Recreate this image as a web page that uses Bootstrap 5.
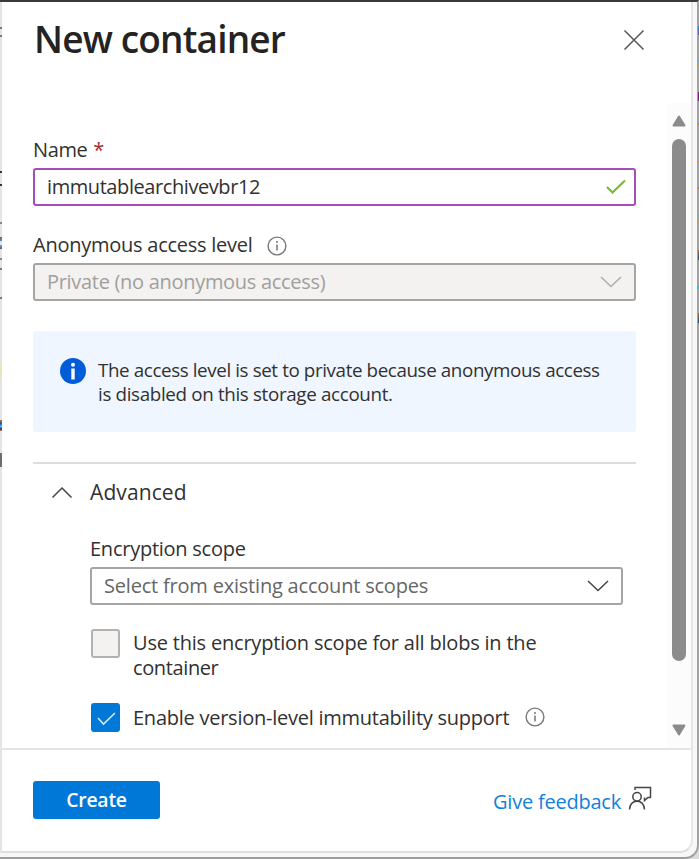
<!DOCTYPE html>
<html lang="en">
<head>
<meta charset="utf-8">
<meta name="viewport" content="width=device-width, initial-scale=1">
<title>New container</title>
<link href="https://cdn.jsdelivr.net/npm/bootstrap@5.3.0/dist/css/bootstrap.min.css" rel="stylesheet">
<style>
body{font-family:"Open Sans","Noto Sans",sans-serif;font-size:20px;line-height:24px;letter-spacing:-.25px;color:#323130;background:#dcdcdc;height:859px;overflow:hidden}
.win{height:859px;border-top:2px solid #3b393b;border-right:2px solid #a2a2a2;border-bottom:2px solid #9c9c9c;border-bottom-right-radius:14px;background:#f7f7f7;padding:0 4px 4px 0}
.pane{border-left:2px solid #e4e4e4;border-right:2px solid #e6e6e6;border-bottom:2px solid #dedede;border-bottom-right-radius:13px;background:#fff}
.head{height:101px;padding:17px 46px 0 32px}
.ttl{font-size:37px;font-weight:600;line-height:40px;letter-spacing:-.83px;color:#242322}
.t{white-space:nowrap}
.body-area{height:647px}
.form-area{padding:35px 31px 0 31px}
.box{height:38px;border:2px solid #a6a5a3;border-radius:3px;padding:1px 8px 0 12px}
.box.ok{border-color:#a64dbb;margin-top:6px}
.box.ok .t{letter-spacing:-.42px}
.box.off{background:#f3f2f1;color:#a19f9d;margin-top:6px;letter-spacing:-.3px}
.box.pick{color:#666;margin-top:6px;letter-spacing:-.2px}
.level{margin-top:27px}
.note{height:101px;margin-top:30px;background:#eff6ff;border-radius:3px;padding:27px 20px 0 27px;font-size:18.8px;letter-spacing:-.39px}
.note-text{margin-left:12px}
.note-text .t{letter-spacing:-.34px}
.rule{border-top:2px solid #dddddc;margin-top:30px}
.fold{margin-top:16px;padding-left:18px}
.fold .t{font-size:21px;letter-spacing:.1px;margin-left:17px}
.adv{padding-left:57px;padding-right:13px}
.scope{margin-top:33px}
.opt{margin:24px 0 0 1px}
.opt-text{margin-left:13px;line-height:25px}
.opt + .opt{margin-top:23px}
.opt-text.two{padding-top:1px;letter-spacing:-.2px}
.cb{width:29px;height:29px;border:2px solid #b3b2b0;border-radius:3px;background:#f3f2f1}
.cb.on{background:#0078d7;border-color:#0078d7}
.rail{width:24px;background:#fcfcfc;padding-top:12px}
.thumb{width:14px;height:522px;border-radius:7px;background:#8b8b8b;margin-top:12px;margin-bottom:63px}
.foot{height:103px;border-top:2px solid #e4e4e4;padding:31px 39px 0 31px}
.make,.make:hover{width:127px;height:38px;background:#0078d7;color:#fff;border-radius:3px;font-weight:600;font-size:19.4px;line-height:36px;padding:0;border:0;letter-spacing:-.2px}
.fb{color:#1181db;padding-top:9px;letter-spacing:-.22px}
.fb svg{margin:-4px 0 0 7px}
.req{color:#a4262c;margin-left:1px}
.tight{letter-spacing:-.38px}
svg{display:block;fill:none;flex:none}
.edge{position:absolute;top:0;width:2px;height:859px;background-repeat:no-repeat}
.edge-l{left:0;background-image:linear-gradient(#777,#777),linear-gradient(#777,#777),linear-gradient(#333,#333),linear-gradient(#333,#333),linear-gradient(#888,#888),linear-gradient(#8a5f60,#3e8fe0),linear-gradient(#55aef5,#725545),linear-gradient(#888,#888),linear-gradient(#777,#777),linear-gradient(#777,#777),linear-gradient(#e9e6bd,#e9e6bd),linear-gradient(#c97a2c,#0b59bd 30%,#5db4ff 60%,#123a8c 80%,#c97a2c),linear-gradient(#6d6d6d,#6d6d6d);background-size:2px 2px,2px 2px,2px 2px,2px 2px,2px 2px,2px 4px,2px 4px,2px 2px,2px 2px,2px 2px,2px 14px,2px 11px,2px 14px;background-position:0 27px,0 35px,0 171px,0 184px,0 222px,0 237px,0 245px,0 258px,0 268px,0 297px,0 363px,0 420px,0 453px}
.edge-r{right:0;width:1px;background-image:linear-gradient(#258fd0,#7b4fb0),linear-gradient(#58acd4,#d49a3c),linear-gradient(#7c1a7d,#7c1a7d),linear-gradient(#b58239,#b58239),linear-gradient(#c19548,#c19548),linear-gradient(#a9793a,#a9793a),linear-gradient(#68a8c8,#d09a47),linear-gradient(#a86634,#244a83),linear-gradient(#3cb0c4,#3cb0c4),linear-gradient(#a86634,#244a83);background-size:1px 9px,1px 7px,1px 9px,1px 2px,1px 2px,1px 2px,1px 9px,1px 10px,1px 3px,1px 10px;background-position:0 26px,0 60px,0 92px,0 123px,0 161px,0 187px,0 214px,0 250px,0 286px,0 313px}
</style>
<script src="https://cdn.jsdelivr.net/npm/bootstrap@5.3.0/dist/js/bootstrap.bundle.min.js"></script>
</head>
<body>
<div class="win d-flex">
<div class="pane flex-grow-1 d-flex flex-column">
  <header class="head d-flex justify-content-between">
    <h1 class="ttl m-0">New container</h1>
    <svg width="22" height="24" class="mt-2" viewBox="0 0 22 24" stroke="#555" stroke-width="1.500"><path d="M1.500 3.500l19 19M20.500 3.500l-19 19"/></svg>
  </header>
  <div class="body-area d-flex">
    <main class="form-area flex-grow-1">
      <div class="tight"><span>Name</span> <span class="req">*</span></div>
      <div class="box ok d-flex align-items-center justify-content-between"><span class="t">immutablearchivevbr12</span>
        <svg width="20" height="16" viewBox="0 0 20 16" stroke="#76b82e" stroke-width="2"><path d="M1 8l5.500 5.500L19 1.500"/></svg></div>
      <div class="level d-flex align-items-center"><span class="t">Anonymous access level</span>
        <svg class="ms-3 me-auto" width="20" height="20" viewBox="0 0 20 20" stroke="#797775" stroke-width="1.400" transform="translate(-2 1)"><circle cx="10" cy="10" r="8.900"/><path d="M10 8.500v6M10 5v2" stroke="#8f8d8b" stroke-width="1.800"/></svg></div>
      <div class="box off d-flex align-items-center justify-content-between"><span class="t">Private (no anonymous access)</span>
        <svg width="29" height="14" viewBox="0 0 29 14" stroke="#b0aeac" stroke-width="1.600"><path d="M4 2l10 9.500L24 2"/></svg></div>
      <div class="note d-flex">
        <svg width="26" height="26" viewBox="0 0 26 26"><circle cx="13" cy="13" r="13" fill="#015cda"/><circle cx="13" cy="6.800" r="2" fill="#fff"/><path d="M11.300 10.500h3.400v11h-3.400z" fill="#fff"/></svg>
        <div class="note-text text-nowrap">The access level is set to private because anonymous access<br><span class="t">is disabled on this storage account.</span></div>
      </div>
      <div class="rule"></div>
      <div class="fold d-flex align-items-center"><svg width="22" height="14" viewBox="0 0 22 14" stroke="#484644" stroke-width="1.500"><path d="M1.500 12.500L11 3 20.500 12.500"/></svg><span class="t">Advanced</span></div>
      <div class="adv">
        <div class="scope t">Encryption scope</div>
        <div class="box pick d-flex align-items-center justify-content-between"><span class="t">Select from existing account scopes</span>
          <svg width="29" height="14" viewBox="0 0 29 14" stroke="#484644" stroke-width="1.500"><path d="M4 2l10 9.500L24 2"/></svg></div>
        <div class="opt d-flex"><div class="cb"></div><div class="opt-text two text-nowrap">Use this encryption scope for all blobs in the<br><span class="tight">container</span></div></div>
        <div class="opt d-flex align-items-center"><div class="cb on"><svg width="25" height="25" viewBox="0 0 25 25" stroke="#d6e9f9" stroke-width="1.600"><path d="M5 13l5.500 6L22 8"/></svg></div><span class="opt-text t">Enable version-level immutability support</span>
          <svg class="ms-3" width="20" height="20" viewBox="0 0 20 20" stroke="#797775" stroke-width="1.400"><circle cx="10" cy="10" r="8.900"/><path d="M10 8.500v6M10 5v2" stroke="#8f8d8b" stroke-width="1.800"/></svg></div>
      </div>
    </main>
    <aside class="rail d-flex flex-column align-items-center">
      <svg width="14" height="12" viewBox="0 0 14 12"><path d="M7 1.500L12.500 10.500H1.500z" fill="#8b8b8b" stroke="#8b8b8b" stroke-width="2" stroke-linejoin="round"/></svg>
      <div class="thumb"></div>
      <svg width="14" height="12" viewBox="0 0 14 12"><path d="M7 10.500L12.500 1.500H1.500z" fill="#8b8b8b" stroke="#8b8b8b" stroke-width="2" stroke-linejoin="round"/></svg>
    </aside>
  </div>
  <footer class="foot d-flex justify-content-between">
    <button class="btn make">Create</button>
    <div class="d-flex fb"><span class="t">Give feedback</span>
      <svg width="24" height="24" viewBox="0 0 24 24" stroke="#484644" stroke-width="1.500"><path d="M7 4V1.500H22.500V11.500H20L16.500 14.500V11.500"/><circle cx="9" cy="10.800" r="4.200"/><path d="M1.500 23.500c.5-5.500 3.500-8.300 7.500-8.300s7 2.800 7.500 8.300"/></svg></div>
  </footer>
</div>
</div>
<div class="edge edge-l"></div>
<div class="edge edge-r"></div>
</body>
</html>
